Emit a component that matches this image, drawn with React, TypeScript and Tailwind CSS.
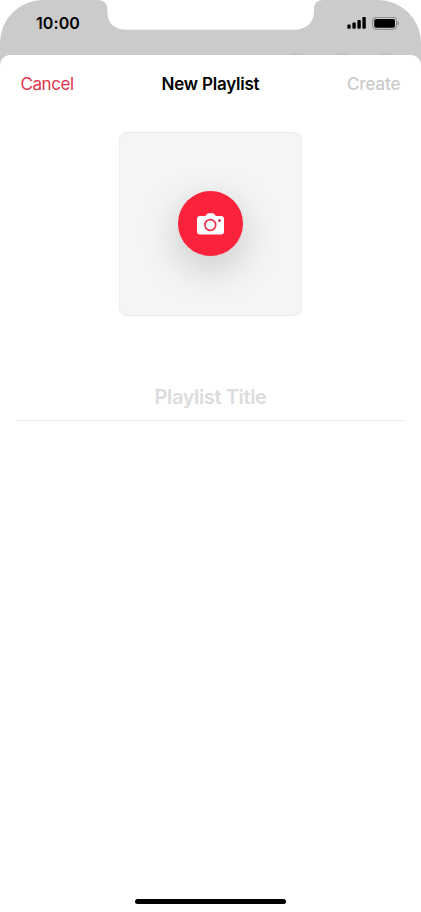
// Status bar cutout at the top of the device
const Notch = () => (
  <svg
    className="absolute left-[98px] top-0 h-[31px] w-[225px]"
    viewBox="0 0 225 31"
    fill="#fff"
  >
    <path d="M0 0C6 0.5 9.3 3 9.3 9v2C9.3 23 16 29.8 29 29.8H195C208 29.8 216 23 216 11V9C216 3 219 .5 225 0Z" />
  </svg>
);

const SignalIcon = () => (
  <svg className="h-3 w-[19px]" viewBox="0 0 19 12" fill="#000">
    <rect x="0.3" y="7.6" width="3.4" height="4.2" rx="1" />
    <rect x="5.4" y="5.6" width="3.4" height="6.2" rx="1" />
    <rect x="10.4" y="3" width="3.4" height="8.8" rx="1" />
    <rect x="15.4" y="0" width="3.4" height="11.8" rx="1" />
  </svg>
);

const BatteryIcon = () => (
  <svg className="h-[13px] w-[27px]" viewBox="0 0 27 13" fill="#000">
    <rect
      x="0.6"
      y="0.3"
      width="24"
      height="12"
      rx="3.6"
      fill="none"
      stroke="#858585"
    />
    <rect x="2.2" y="1.9" width="20.8" height="8.9" rx="2" />
    <path d="M25.6 4.2c1.5.6 1.5 3.6 0 4.2Z" fill="#7d7d7d" />
  </svg>
);

const CameraIcon = () => (
  <svg className="h-[22px] w-[27px]" viewBox="0 0 27 22">
    <path
      d="M3 3h4.4c.8 0 1.2-.2 1.7-.8l.7-1C10.4.4 11 .2 12 .2h3.200c1 0 1.600.2 2.200 1l.7 1c.5.6.9.8 1.700.8H24c2 0 3 1 3 2.900v12.600c0 2-1 2.900-3 2.900H3c-2 0-3-.9-3-2.900V5.900C0 4 1 3 3 3Z"
      fill="#fff"
    />
    <circle
      cx="13.3"
      cy="12"
      r="5.4"
      fill="none"
      stroke="#ee2c43"
      strokeWidth="1.6"
    />
    <circle cx="22.5" cy="7.6" r="1.4" fill="#e02c42" />
  </svg>
);

// Status bar with the dimmed screen behind the sheet
const StatusBar = () => {
  return (
    <div className="relative h-[67px] overflow-hidden rounded-t-[43px] bg-[#cbcbcb]">
      <Notch />
      <div className="flex h-[46px] items-center justify-between pl-9 pr-[22px]">
        <span className="text-[16px] font-semibold leading-5 tracking-[0.08px] text-black">
          10:00
        </span>
        <div className="flex items-center gap-[6px]">
          <SignalIcon />
          <BatteryIcon />
        </div>
      </div>
      {/* Buttons peeking out from behind the sheet */}
      <div className="absolute right-[19px] top-[53px] flex gap-[15px]">
        <div className="size-[30px] rounded-full bg-[#c0c0c0]" />
        <div className="size-[30px] rounded-full bg-[#c0c0c0]" />
        <div className="size-[30px] rounded-full bg-[#c0c0c0]" />
      </div>
    </div>
  );
};

const SheetHeader = () => {
  return (
    <div className="grid h-[57px] grid-cols-3 items-center px-5 text-[17px] leading-6">
      <button className="justify-self-start pl-[0.5px] tracking-[-0.45px] text-[#e0354c]">
        Cancel
      </button>
      <h1 className="justify-self-center whitespace-nowrap font-semibold tracking-[-0.22px] text-black">
        New Playlist
      </h1>
      <button className="justify-self-end pr-[0.5px] font-medium tracking-[-0.1px] text-[#cbcbcb]">
        Create
      </button>
    </div>
  );
};

const App = () => {
  return (
    <div className="flex h-[912px] w-[421px] flex-col overflow-hidden bg-white font-['Inter',sans-serif]">
      <StatusBar />

      {/* Sheet */}
      <main className="relative -mt-3 flex flex-1 flex-col rounded-t-[10px] bg-white">
        <SheetHeader />

        {/* Artwork picker */}
        <div className="mt-5 flex h-[184px] w-[183px] items-center justify-center self-center rounded-[8px] border border-[#ececec] bg-[#f5f5f5] pb-px">
          <button
            aria-label="Add artwork"
            className="flex size-[65px] items-center justify-center rounded-full bg-[#fb233b] shadow-[0_12px_40px_rgba(0,0,0,0.2)]"
          >
            <CameraIcon />
          </button>
        </div>

        {/* Title field */}
        <div className="ml-4 mr-[17px] mt-[64px] flex h-[41px] items-start justify-center border-b border-[#e8e8e8] pt-[3px]">
          <span className="pl-px text-[20px] font-semibold leading-7 tracking-[-0.38px] text-[#dcdcde]">
            Playlist Title
          </span>
        </div>

        {/* Home indicator */}
        <div className="mb-2 mt-auto h-[5px] w-[151px] self-center rounded-full bg-black" />
      </main>
    </div>
  );
};

export default App;
